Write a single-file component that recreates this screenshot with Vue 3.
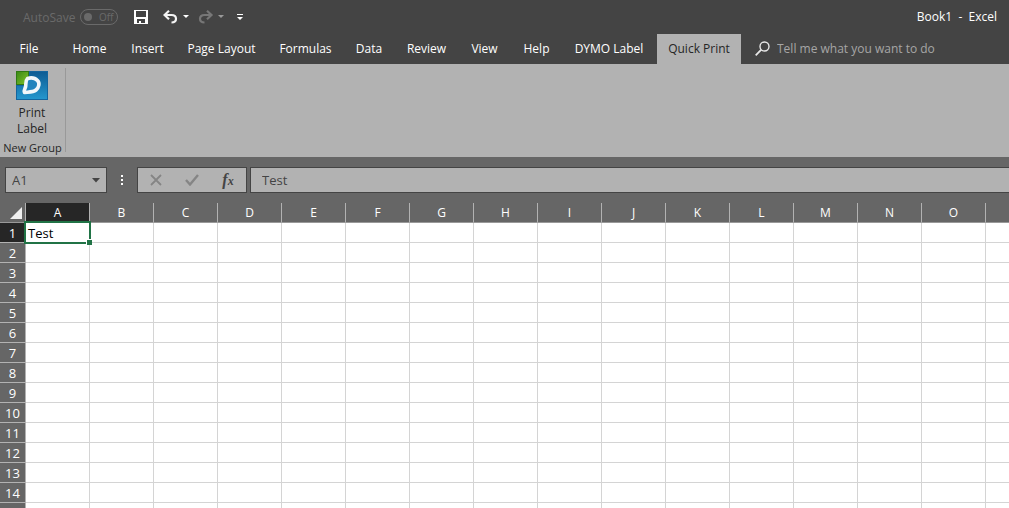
<script setup>
import { ref } from 'vue'

const tabs = [
  { name: 'File', cls: 'file' },
  { name: 'Home', cls: 'home' },
  { name: 'Insert', cls: 'insert' },
  { name: 'Page Layout', cls: 'page' },
  { name: 'Formulas', cls: 'formulas' },
  { name: 'Data', cls: 'data' },
  { name: 'Review', cls: 'review' },
  { name: 'View', cls: 'view' },
  { name: 'Help', cls: 'help' },
  { name: 'DYMO Label', cls: 'dymo' },
  { name: 'Quick Print', cls: 'quick' },
]
const active = ref('Quick Print')
const columns = [...'ABCDEFGHIJKLMNO', '']
const rows = [...Array.from({ length: 14 }, (_, i) => i + 1), '']
const cellName = ref('A1')
const content = ref('Test')
</script>

<template>
  <div class="app">
    <header class="titlebar">
      <div class="quick-access">
        <span id="autosave" class="autosave">AutoSave</span>
        <button class="switch" role="switch" aria-checked="false" aria-labelledby="autosave">
          <span class="knob"></span><span>Off</span>
        </button>
        <button class="tool save" aria-label="Save">
          <svg width="14" height="14" viewBox="0 0 14 14">
            <path fill="#fff" fill-rule="evenodd" d="M0 0h14v14H0zM2 1v6h10V1zM3 9v4h2v-2h2v2h4V9z" />
          </svg>
        </button>
        <button class="tool undo" aria-label="Undo">
          <svg width="26" height="14" viewBox="0 0 26 14">
            <path d="M6 0.8L1.500 5L6 9.200M2 5h6.500c3 0 4.500 1.600 4.500 3.800S11.500 12.500 8.500 12.500" fill="none" stroke="#f4f4f4" stroke-width="2.200" />
            <path d="M20 5h6l-3 3z" fill="#fff" />
          </svg>
        </button>
        <button class="tool redo" aria-label="Redo">
          <svg width="26" height="14" viewBox="0 0 26 14">
            <path d="M9 0.800L13.500 5L9 9.200M13 5H6.500C3.500 5 2 6.600 2 8.800S3.500 12.500 6.500 12.500" fill="none" stroke="#777" stroke-width="2.200" />
            <path d="M20 5h6l-3 3z" fill="#999" />
          </svg>
        </button>
        <button class="tool more" aria-label="Customize Quick Access Toolbar">
          <svg width="6" height="7" viewBox="0 0 6 7">
            <path d="M0 0h6v1H0zM0 3h6L3 6z" fill="#fff" />
          </svg>
        </button>
      </div>
      <div class="doc-title">Book1&nbsp; - &nbsp;Excel</div>
    </header>

    <nav class="tabs">
      <button
        v-for="tab in tabs"
        :key="tab.name"
        class="tab"
        :class="[tab.cls, { active: active === tab.name }]"
        @click="active = tab.name"
      >{{ tab.name }}</button>
      <label class="tell">
        <svg width="15" height="15" viewBox="0 0 15 15">
          <circle cx="9.500" cy="5.500" r="4.500" fill="none" stroke="#e8e8e8" stroke-width="1.400" />
          <path d="M6.300 8.700L0.700 14.300" stroke="#e8e8e8" stroke-width="1.800" />
        </svg>
        <input type="text" placeholder="Tell me what you want to do" aria-label="Tell me what you want to do" />
      </label>
    </nav>

    <section class="ribbon">
      <div class="group">
        <button class="print">
          <svg width="32" height="29" viewBox="0 0 32 29">
            <defs>
              <linearGradient id="blue" x1="0" y1="0" x2="0" y2="1">
                <stop offset="0" stop-color="#0d5c94" />
                <stop offset="1" stop-color="#2496cd" />
              </linearGradient>
              <linearGradient id="green" x1="0" y1="0" x2="1" y2="1">
                <stop offset="0" stop-color="#3c8a16" />
                <stop offset="1" stop-color="#7fc22a" />
              </linearGradient>
            </defs>
            <rect width="32" height="29" fill="#14659e" />
            <rect x="1" y="1" width="30" height="27" fill="url(#blue)" />
            <path d="M0 0h14v15H0z" fill="#14659e" />
            <path d="M0 0h13v14H0z" fill="#2f7913" />
            <path d="M1 1h11v12H1z" fill="url(#green)" />
            <path d="M11.500 7.500C15 6.500 19 7 21.500 9.500C24 12 23 16.500 20 19C17 21.500 12 21 8.500 21.500C7.500 18.500 9.500 17.500 9.700 15C10 12 9.500 9.500 11.500 7.500Z" fill="#2284bd" stroke="#f2f7fa" stroke-width="3.600" stroke-linejoin="round" />
          </svg>
          <span>Print<br />Label</span>
        </button>
        <div class="group-name">New Group</div>
      </div>
    </section>

    <section class="formula-bar">
      <div class="name-box">
        <input v-model="cellName" type="text" aria-label="Name Box" />
        <button aria-label="Choose a name">
          <svg width="8" height="5" viewBox="0 0 8 5"><path d="M0 0h8L4 4.500z" fill="#444" /></svg>
        </button>
      </div>
      <svg class="dots" width="2" height="10" viewBox="0 0 2 10">
        <path d="M0 0h2v2H0zM0 4h2v2H0zM0 8h2v2H0z" fill="#fff" />
      </svg>
      <div class="actions">
        <button aria-label="Cancel">
          <svg width="12" height="12" viewBox="0 0 12 12"><path d="M1 1l10 10M11 1L1 11" stroke="#858585" stroke-width="1.800" /></svg>
        </button>
        <button aria-label="Enter">
          <svg width="14" height="12" viewBox="0 0 14 12"><path d="M1 6l4 4.500L13 1" fill="none" stroke="#858585" stroke-width="2.400" /></svg>
        </button>
        <button class="fx" aria-label="Insert Function"><i>f</i><i class="x">x</i></button>
      </div>
      <input v-model="content" class="formula" type="text" aria-label="Formula Bar" />
    </section>

    <main class="sheet">
      <table>
        <colgroup>
          <col class="row-col" />
          <col v-for="c in columns" :key="c" class="data-col" />
        </colgroup>
        <thead>
          <tr>
            <th class="corner" aria-label="Select all">
              <svg width="12" height="12" viewBox="0 0 12 12"><path d="M12 0v12H0z" fill="#f0f0f0" /></svg>
            </th>
            <th v-for="c in columns" :key="c" scope="col" :class="{ selected: c === 'A' }">{{ c }}</th>
          </tr>
        </thead>
        <tbody>
          <tr v-for="r in rows" :key="r">
            <th scope="row" :class="{ selected: r === 1 }">{{ r }}</th>
            <td v-for="c in columns" :key="c" :class="{ current: r === 1 && c === 'A' }">
              <template v-if="r === 1 && c === 'A'">{{ content }}<span class="outline"></span><span class="handle"></span></template>
            </td>
          </tr>
        </tbody>
      </table>
    </main>
  </div>
</template>

<style>
body {
  margin: 0;
  background: #fff;
}
</style>

<style scoped>
.app {
  height: 100vh;
  display: flex;
  flex-direction: column;
  overflow: hidden;
  font-family: "Open Sans", "Noto Sans", sans-serif;
  font-size: 12px;
  color: #262626;
}
button,
input {
  font: inherit;
  color: inherit;
  background: none;
  border: 0;
  padding: 0;
  margin: 0;
  min-width: 0;
  outline: 0;
}
svg {
  display: block;
  flex: none;
}
.titlebar {
  flex: none;
  height: 34px;
  display: flex;
  justify-content: space-between;
  align-items: center;
  padding: 0 12px 0 23px;
  background: #444;
  color: #fff;
}
.quick-access {
  display: flex;
  align-items: center;
}
.autosave {
  width: 57px;
  color: #6a6a6a;
  white-space: nowrap;
}
.switch {
  width: 38px;
  height: 16px;
  display: flex;
  align-items: center;
  gap: 7px;
  box-sizing: border-box;
  padding-left: 3px;
  border: 1px solid #6a6a6a;
  border-radius: 8px;
  color: #6a6a6a;
  font-size: 10px;
  line-height: 14px;
}
.knob {
  width: 8px;
  height: 8px;
  border-radius: 50%;
  background: #6a6a6a;
}
.save {
  margin-left: 16px;
}
.undo {
  margin-left: 15px;
}
.redo {
  margin-left: 9px;
}
.more {
  margin-left: 13px;
}
.doc-title {
  white-space: nowrap;
  padding-bottom: 2px;
}
.tabs {
  flex: none;
  height: 30px;
  display: flex;
  background: #444;
  color: #fff;
}
.tab {
  flex: none;
  white-space: nowrap;
  text-align: center;
}
.file { width: 58px; }
.home { width: 63px; }
.insert { width: 53px; }
.page { width: 95px; }
.formulas { width: 73px; }
.data { width: 54px; }
.review { width: 61px; }
.view { width: 55px; }
.help { width: 49px; }
.dymo { width: 96px; }
.quick { width: 84px; }
.tab,
.tell {
  box-sizing: border-box;
  padding-bottom: 2px;
}
.tab.active {
  background: #b2b2b2;
  color: #262626;
}
.tell {
  flex: 1;
  display: flex;
  align-items: center;
  gap: 7px;
  padding-left: 14px;
  color: #a6a6a6;
}
.tell input {
  flex: 1;
}
.tell input::placeholder {
  color: #a6a6a6;
  opacity: 1;
}
.ribbon {
  flex: none;
  height: 93px;
  display: flex;
  background: #b2b2b2;
}
.group {
  width: 65px;
  height: 84px;
  margin-top: 4px;
  border-right: 1px solid #999;
  display: flex;
  flex-direction: column;
  align-items: center;
}
.print {
  width: 64px;
  align-self: flex-start;
  display: flex;
  flex-direction: column;
  align-items: center;
  gap: 5px;
  padding-top: 3px;
  line-height: 16px;
}
.group-name {
  line-height: 16px;
  padding-top: 3px;
  white-space: nowrap;
  font-size: 11px;
}
.formula-bar {
  flex: none;
  height: 26px;
  padding: 10px 0 10px 5px;
  display: flex;
  align-items: center;
  background: #666;
  color: #444;
  font-size: 13px;
}
.name-box,
.actions,
.formula {
  box-sizing: border-box;
  height: 26px;
  border: 1px solid #444;
  background: #b2b2b2;
}
.name-box {
  width: 102px;
  display: flex;
  padding: 0 6px;
}
.name-box input {
  flex: 1;
}
.dots {
  margin: 0 14px;
}
.actions {
  width: 110px;
  display: grid;
  grid-template-columns: repeat(3, 1fr);
  place-items: center;
}
.fx {
  font-family: "Liberation Serif", serif;
  font-size: 16px;
  font-weight: bold;
  line-height: 18px;
}
.x {
  font-size: 12px;
}
.formula {
  flex: 1;
  margin-left: 3px;
  padding-left: 11px;
  border-right: 0;
}
.sheet {
  flex: 1;
  min-height: 0;
  overflow: hidden;
  background: #fff;
}
table {
  width: 1050px;
  table-layout: fixed;
  border-collapse: separate;
  border-spacing: 0;
  font-size: 13px;
  line-height: 18px;
}
.row-col {
  width: 26px;
}
.data-col {
  width: 64px;
}
th,
td {
  box-sizing: border-box;
  height: 20px;
  padding: 1px 0 0;
  border-right: 1px solid #d4d4d4;
  border-bottom: 1px solid #d4d4d4;
}
th {
  background: #666;
  color: #fff;
  font-weight: normal;
  border-color: #b2b2b2;
}
thead th {
  font-size: 12px;
  border-bottom-color: #999;
}
th.corner {
  padding-left: 10px;
}
th.selected {
  background: #262626;
}
td.current {
  position: relative;
  padding-left: 2px;
  color: #000;
}
.outline {
  position: absolute;
  inset: -2px;
  border: 2px solid #217346;
}
.handle {
  position: absolute;
  right: -3px;
  bottom: -3px;
  width: 5px;
  height: 5px;
  background: #217346;
  border: 1px solid #fff;
  border-right: 0;
  border-bottom: 0;
}
</style>
